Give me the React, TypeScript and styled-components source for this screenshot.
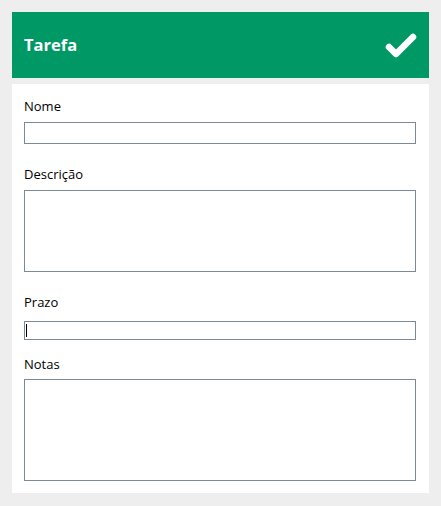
import React from 'react';
import styled, { createGlobalStyle } from 'styled-components';

const GlobalStyle = createGlobalStyle`
  html, body {
    margin: 0;
    padding: 0;
    background: #eeeeee;
    font-family: "Open Sans", "Noto Sans", sans-serif;
  }
`;

const Page = styled.div`
  padding: 12px;
  display: flex;
  flex-direction: column;
  gap: 6px;
`;

const Header = styled.div`
  height: 66px;
  background: #009966;
  display: flex;
  align-items: center;
  justify-content: space-between;
  padding: 0 11px 0 12px;
  color: #ffffff;
`;

const Title = styled.h1`
  margin: 0;
  font-size: 16.5px;
  font-weight: 700;
  line-height: 24px;
`;

const CheckButton = styled.button`
  border: none;
  background: none;
  padding: 0;
  display: flex;
  cursor: pointer;
`;

const Form = styled.form`
  background: #ffffff;
  padding: 12px 13px 12px 12px;
  display: flex;
  flex-direction: column;
`;

const Label = styled.label<{ $top: number }>`
  display: block;
  margin-top: ${(p) => p.$top}px;
  font-size: 13px;
  line-height: 20px;
  color: #000000;
`;

const FieldBox = styled.div<{ $top: number }>`
  position: relative;
  margin-top: ${(p) => p.$top}px;
`;

const Input = styled.input<{ $h: number }>`
  display: block;
  box-sizing: border-box;
  width: 100%;
  height: ${(p) => p.$h}px;
  margin: 0;
  border: 1px solid #7a8a99;
  border-radius: 0;
  padding: 0 2px;
  font: inherit;
  font-size: 13px;
  outline: none;
`;

const TextArea = styled.textarea<{ $h: number }>`
  display: block;
  box-sizing: border-box;
  width: 100%;
  height: ${(p) => p.$h}px;
  margin: 0;
  border: 1px solid #7a8a99;
  border-radius: 0;
  padding: 2px;
  font: inherit;
  font-size: 13px;
  resize: none;
  outline: none;
`;

const Caret = styled.span`
  position: absolute;
  left: 2px;
  top: 3px;
  width: 1px;
  height: 13px;
  background: #000000;
`;

export default function App(): JSX.Element {
  return (
    <>
      <GlobalStyle />
      <Page>
        <Header>
          <Title>Tarefa</Title>
          <CheckButton type="button" aria-label="Salvar">
            <svg width="34" height="28" viewBox="0 0 34 28">
              <polyline
                points="5,16 12,23 29,6"
                fill="none"
                stroke="#ffffff"
                strokeWidth="6.5"
                strokeLinecap="round"
                strokeLinejoin="round"
              />
            </svg>
          </CheckButton>
        </Header>
        <Form>
          <Label $top={0}>Nome</Label>
          <FieldBox $top={6}>
            <Input $h={22} />
          </FieldBox>
          <Label $top={20}>Descrição</Label>
          <FieldBox $top={6}>
            <TextArea $h={82} />
          </FieldBox>
          <Label $top={20}>Prazo</Label>
          <FieldBox $top={9}>
            <Input $h={19} />
            <Caret />
          </FieldBox>
          <Label $top={14}>Notas</Label>
          <FieldBox $top={5}>
            <TextArea $h={102} />
          </FieldBox>
        </Form>
      </Page>
    </>
  );
}
